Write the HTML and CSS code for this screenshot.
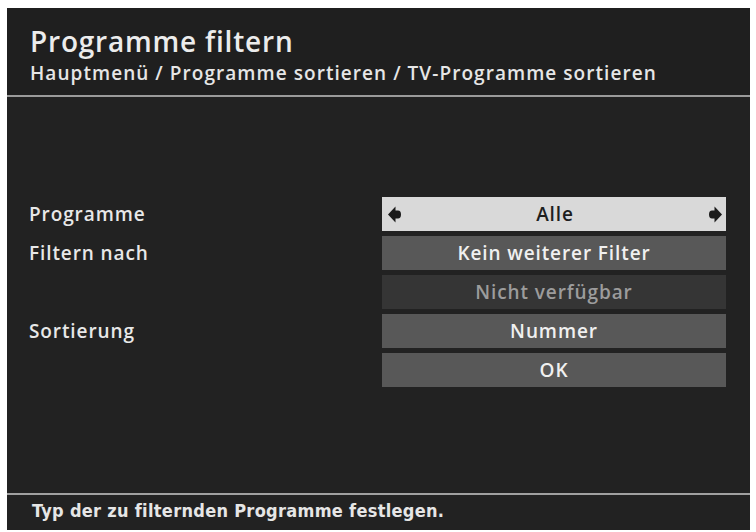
FILE: index.html
```html
<!DOCTYPE html>
<html lang="de">
<head>
<meta charset="utf-8">
<title>Programme filtern</title>
<link rel="stylesheet" href="styles.css">
</head>
<body>
<div class="screen">
  <header class="header">
    <div class="title">Programme filtern</div>
    <div class="crumbs">Hauptmenü / Programme sortieren / TV-Programme sortieren</div>
  </header>
  <main class="content">
    <div class="form">
      <div class="label">Programme</div>
      <div class="value value-selected">
        <svg class="arrow" width="13" height="17" viewBox="0 0 13 17"><path d="M0 8.5 L7.5 0.5 L7.5 4.5 L10 4.5 Q13 4.5 13 8.5 Q13 12.5 10 12.5 L7.5 12.5 L7.5 16.5 Z" fill="#1b1b1b"/></svg>
        <span class="value-text">Alle</span>
        <svg class="arrow" width="13" height="17" viewBox="0 0 13 17"><path d="M13 8.5 L5.5 0.5 L5.5 4.5 L3 4.5 Q0 4.5 0 8.5 Q0 12.5 3 12.5 L5.5 12.5 L5.5 16.5 Z" fill="#1b1b1b"/></svg>
      </div>
      <div class="label">Filtern nach</div>
      <div class="value">Kein weiterer Filter</div>
      <div class="label"></div>
      <div class="value value-disabled">Nicht verfügbar</div>
      <div class="label">Sortierung</div>
      <div class="value">Nummer</div>
      <div class="label"></div>
      <div class="value">OK</div>
    </div>
  </main>
  <footer class="footer">Typ der zu filternden Programme festlegen.</footer>
</div>
</body>
</html>
```

FILE: styles.css
```css
html, body {
  margin: 0;
  padding: 0;
  background: #ffffff;
}

body {
  padding: 8px 6px 0 7px;
  height: 532px;
  box-sizing: border-box;
  overflow: hidden;
}

.screen {
  background: #222222;
  height: 522px;
  display: flex;
  flex-direction: column;
  font-family: "Open Sans", "DejaVu Sans", sans-serif;
  font-weight: 600;
  color: #e6e6e6;
}

.header {
  padding: 17px 22px 11px 23px;
  border-bottom: 2px solid #9a9a9a;
  background: #1f1f1f;
}

.title {
  font-size: 28px;
  line-height: 32px;
  letter-spacing: 0.8px;
  color: #ececec;
}

.crumbs {
  margin-top: 5px;
  font-size: 19px;
  line-height: 22px;
  letter-spacing: 1.05px;
  color: #e6e6e6;
}

.content {
  flex: 1;
  padding: 100px 24px 0 22px;
}

.form {
  display: grid;
  grid-template-columns: 1fr 344px;
  grid-auto-rows: 34px;
  row-gap: 5px;
}

.label {
  display: flex;
  align-items: center;
  font-size: 19px;
  letter-spacing: 0.9px;
  color: #e8e8e8;
}

.value {
  display: flex;
  align-items: center;
  justify-content: center;
  background: #585858;
  color: #f0f0f0;
  font-size: 19px;
  letter-spacing: 0.9px;
}

.value-selected {
  background: #d9d9d9;
  color: #1e1e1e;
  justify-content: space-between;
  padding: 0 4px 0 6px;
}

.value-text {
  flex: 1;
  text-align: center;
}

.value-disabled {
  background: #353535;
  color: #9c9c9c;
}

.arrow {
  display: block;
  flex: none;
}

.footer {
  border-top: 2px solid #a0a0a0;
  padding: 6px 25px 0;
  height: 37px;
  box-sizing: border-box;
  font-family: "DejaVu Sans Condensed", "DejaVu Sans", sans-serif;
  font-weight: bold;
  font-size: 18px;
  line-height: 20px;
  letter-spacing: 0.3px;
  color: #e6e6e6;
}
```
